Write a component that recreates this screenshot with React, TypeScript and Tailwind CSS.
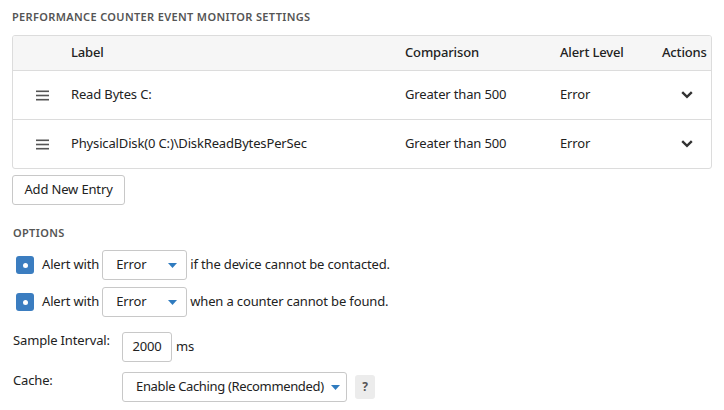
import React from "react";

const font = { fontFamily: '"Noto Sans", "Liberation Sans", sans-serif', letterSpacing: "-0.15px" };

function Hamburger() {
  return (
    <svg width="13" height="11" viewBox="0 0 13 11" className="block">
      <rect x="0" y="0.5" width="13" height="1.6" fill="#555" />
      <rect x="0" y="4.7" width="13" height="1.6" fill="#555" />
      <rect x="0" y="8.9" width="13" height="1.6" fill="#555" />
    </svg>
  );
}

function Chevron() {
  return (
    <svg width="12" height="8" viewBox="0 0 12 8" className="block">
      <path d="M1.2 1.2 L6 5.8 L10.8 1.2" fill="none" stroke="#333" strokeWidth="2.4" />
    </svg>
  );
}

function Caret() {
  return (
    <svg width="9" height="5" viewBox="0 0 9 5" className="block shrink-0">
      <path d="M0 0 L9 0 L4.5 5 Z" fill="#2f7bbf" />
    </svg>
  );
}

function Check() {
  return (
    <div className="w-[18px] h-[18px] rounded-[3px] bg-[#3b7dc0] flex items-center justify-center shrink-0">
      <div className="w-[5px] h-[5px] rounded-full bg-white" />
    </div>
  );
}

function Select({ value, w, pr, tight }: { value: string; w: string; pr: string; tight?: boolean }) {
  return (
    <div className={`h-[30px] ${w} ${pr} shrink-0 border border-[#c8c8c8] rounded-[3px] bg-white flex items-center justify-between pl-[13px] whitespace-nowrap`}>
      <span className={tight ? "tracking-[-0.35px]" : ""}>{value}</span>
      <Caret />
    </div>
  );
}

const rows = [
  { label: "Read Bytes C:", cmp: "Greater than 500", lvl: "Error" },
  { label: "PhysicalDisk(0 C:)\\DiskReadBytesPerSec", cmp: "Greater than 500", lvl: "Error" },
];

export default function App() {
  return (
    <div className="w-[724px] h-[410px] bg-white text-[13px] text-[#222] overflow-hidden" style={font}>
      <div className="pl-[12px] pr-[12px] pt-[10px]">
        <div className="text-[11px] font-semibold tracking-[0.35px] text-[#555] leading-[14px]">
          PERFORMANCE COUNTER EVENT MONITOR SETTINGS
        </div>
        <div className="mt-[11px] w-[700px] border border-[#dcdcdc] rounded-[3px] overflow-hidden">
          <div className="h-[35px] bg-[#f6f6f6] border-b border-[#dcdcdc] flex items-center font-medium">
            <div className="w-[58px]" />
            <div className="w-[334px]">Label</div>
            <div className="w-[155px]">Comparison</div>
            <div className="w-[102px]">Alert Level</div>
            <div>Actions</div>
          </div>
          {rows.map((r, i) => (
            <div
              key={i}
              className={`flex items-center ${i === 0 ? "border-b border-[#dcdcdc] h-[49px]" : "h-[48px]"}`}
            >
              <div className="w-[58px] flex justify-center pl-[1px]">
                <Hamburger />
              </div>
              <div className="w-[334px]">{r.label}</div>
              <div className="w-[155px]">{r.cmp}</div>
              <div className="w-[102px]">{r.lvl}</div>
              <div className="pl-[19px]">
                <Chevron />
              </div>
            </div>
          ))}
        </div>
        <button className="mt-[6px] h-[30px] w-[113px] border border-[#c8c8c8] rounded-[3px] bg-white text-[#222] flex items-center justify-center">
          Add New Entry
        </button>
        <div className="mt-[21px] text-[11px] font-semibold tracking-[0.35px] text-[#555] leading-[14px] pl-[1px]">
          OPTIONS
        </div>
        <div className="mt-[10px] flex items-center pl-[4px]">
          <Check />
          <span className="ml-[8px] mr-[3px]">Alert with</span>
          <Select value="Error" w="w-[85px]" pr="pr-[9px]" />
          <span className="ml-[3px]">if the device cannot be contacted.</span>
        </div>
        <div className="mt-[7px] flex items-center pl-[4px]">
          <Check />
          <span className="ml-[8px] mr-[3px]">Alert with</span>
          <Select value="Error" w="w-[85px]" pr="pr-[9px]" />
          <span className="ml-[3px]">when a counter cannot be found.</span>
        </div>
        <div className="mt-[15px] flex items-start">
          <div className="w-[110px] pl-[1px] leading-[16px]">Sample Interval:</div>
          <div className="h-[30px] w-[50px] border border-[#c8c8c8] rounded-[3px] flex items-center justify-center">2000</div>
          <span className="ml-[4px] self-center">ms</span>
        </div>
        <div className="mt-[10px] flex items-start">
          <div className="w-[110px] pl-[1px] leading-[16px]">Cache:</div>
          <Select value="Enable Caching (Recommended)" w="w-[225px]" pr="pr-[6px]" tight />
          <div className="ml-[8px] mt-[3px] w-[20px] h-[24px] bg-[#ececec] rounded-[3px] flex items-center justify-center text-[12px] font-bold text-[#555]">
            ?
          </div>
        </div>
      </div>
    </div>
  );
}
